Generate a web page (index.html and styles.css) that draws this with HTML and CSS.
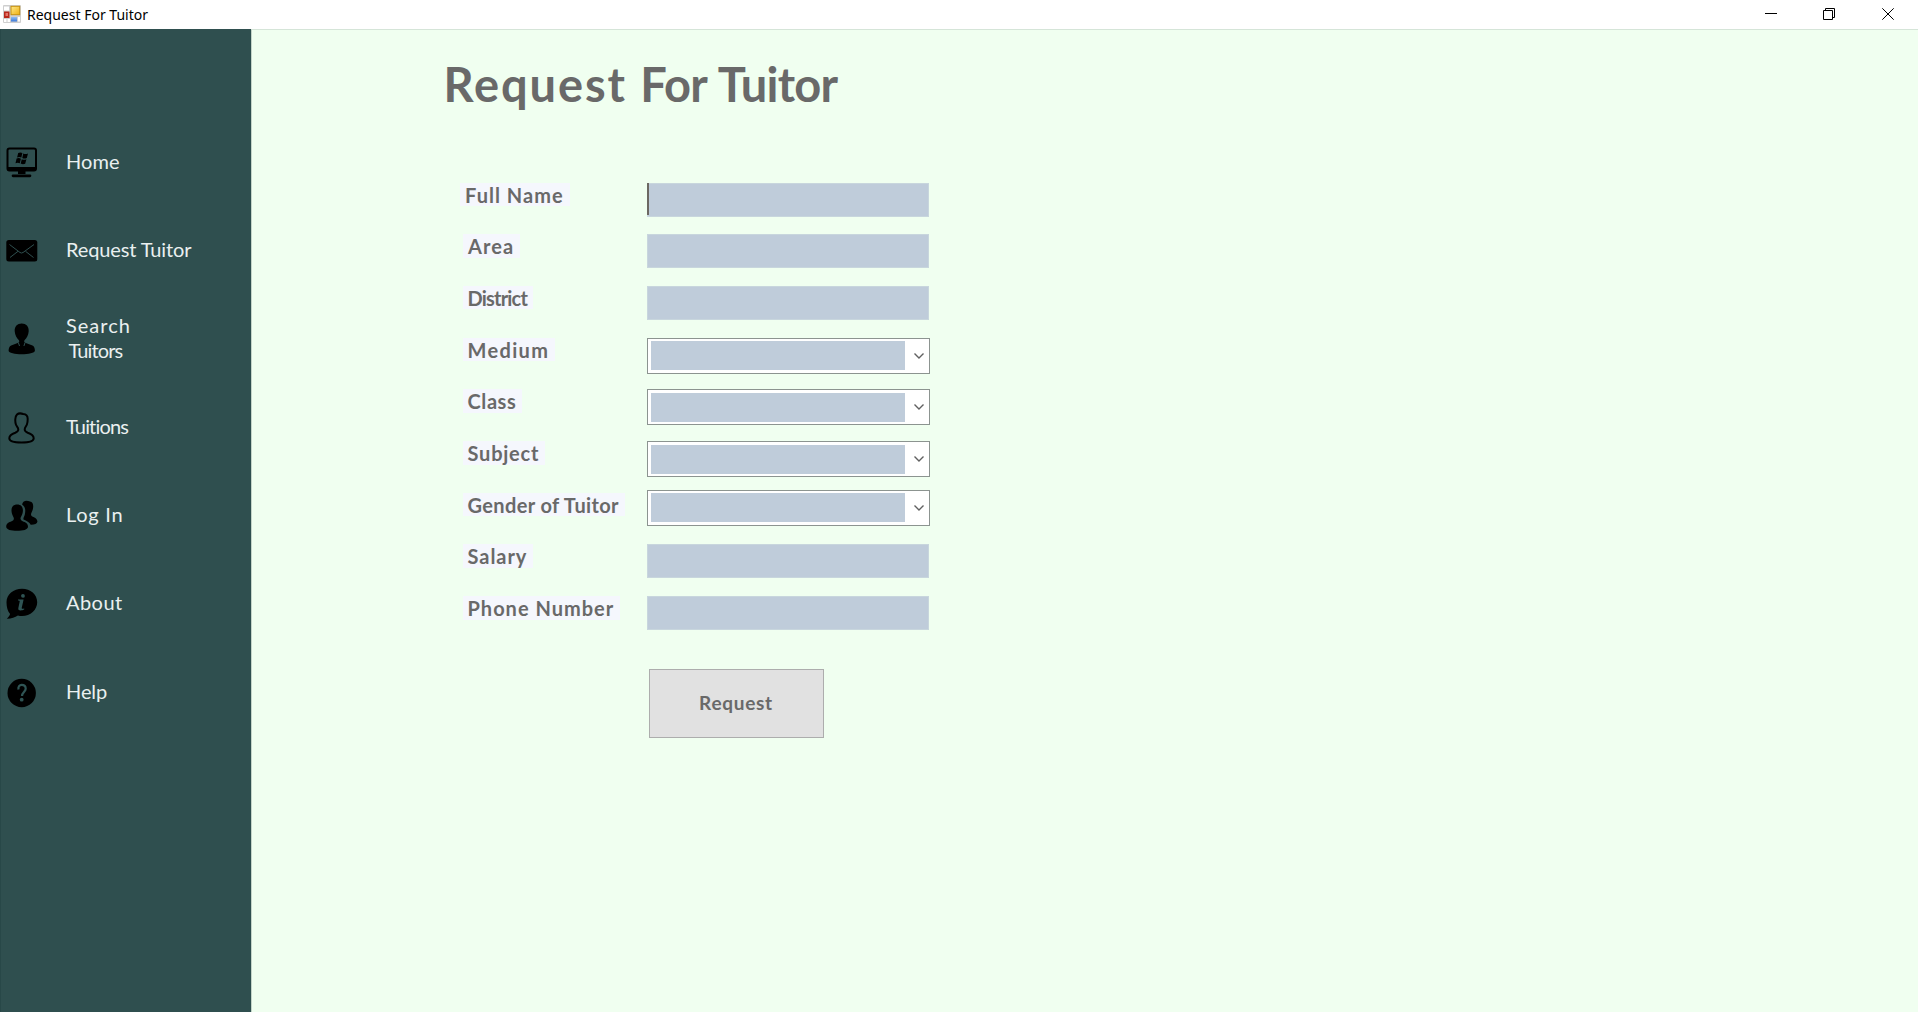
FILE: index.html
```html
<!DOCTYPE html>
<html lang="en">
<head>
<meta charset="utf-8">
<title>Request For Tuitor</title>
<link rel="stylesheet" href="styles.css">
</head>
<body>
<div class="window">
  <header class="titlebar">
    <svg class="app-icon" width="18" height="18" viewBox="0 0 18 18">
      <defs>
        <linearGradient id="gold" x1="0" y1="0" x2="1" y2="1"><stop offset="0" stop-color="#ffe98a"/><stop offset="1" stop-color="#eeb010"/></linearGradient>
        <linearGradient id="blue" x1="0" y1="0" x2="0" y2="1"><stop offset="0" stop-color="#8fbdf5"/><stop offset="1" stop-color="#3a78d8"/></linearGradient>
      </defs>
      <rect width="18" height="18" rx="1" fill="#cfcfcf"/>
      <path d="M1 1.500h5v4H1zM1 14h2.500v3H1zM4.500 14h2.500v3H4.500zM15 12h2v4.500h-2z" fill="#fff"/>
      <rect x="1" y="6.500" width="5.500" height="6.500" fill="#b8281c"/>
      <rect x="2.500" y="8" width="2.500" height="3" fill="#e4756a"/>
      <rect x="8" y="1.300" width="8.700" height="8.400" fill="url(#gold)" stroke="#c8920c"/>
      <rect x="8" y="12" width="6" height="4.500" fill="url(#blue)"/>
    </svg>
    <span class="caption">Request For Tuitor</span>
    <div class="controls">
      <svg width="12" height="12" viewBox="0 0 12 12"><path d="M0 5.500h12"/></svg>
      <svg width="12" height="12" viewBox="0 0 12 12"><path d="M.5 2.500h9v9h-9zM2.500 2.500v-2h9v9h-2"/></svg>
      <svg width="12" height="12" viewBox="0 0 12 12"><path d="M.3.300l11.400 11.400M11.700.300L.3 11.700"/></svg>
    </div>
  </header>
  <div class="body">
    <nav class="sidebar">
      <a class="item"><svg class="icon" viewBox="0 0 32 32">
        <path fill-rule="evenodd" d="M3.500.500h24.500a3 3 0 0 1 3 3v18a3 3 0 0 1-3 3H3.500a3 3 0 0 1-3-3v-18a3 3 0 0 1 3-3zm0 2a1 1 0 0 0-1 1V20H29V3.500a1 1 0 0 0-1-1z"/>
        <path d="M12 24h7.500v3H12zM7 27.500h17a1.300 1.300 0 0 1 0 2.700H7a1.300 1.300 0 0 1 0-2.700z"/>
        <path d="M12.200 6q2.300-1 4.200.100l-1.100 4.500q-2-1-4.200-.100zM17.300 6.600q2.200 1 4.700 0l-1.200 4.500q-2.300 1-4.500 0zM10.600 11.600q2.300-1 4.300.100l-1.100 4.500q-2-1-4.300 0zM15.800 12.200q2.200 1 4.600 0l-1.200 4.500q-2.300 1-4.500-.100z"/>
      </svg><span class="text home">Home</span></a>
      <a class="item"><svg class="icon" viewBox="0 0 32 32">
        <rect x=".3" y="5" width="31" height="21.500" rx="2.500"/>
        <path class="cut" d="M3.500 9.500L14 17.500q1.500 1 3 0L28 9.500M4 22.500l8-6.200M27.500 22.500l-8-6.200"/>
      </svg><span class="text request">Request Tuitor</span></a>
      <a class="item"><svg class="icon" viewBox="0 0 32 32">
        <path d="M15.700.600c4.500 0 7.200 3 7 7.600-.2 4-2.200 7.200-4 8.800-.6.600-.6 1.700-.2 2.500l8 3.100c1.700.7 2.400 3.200 2.400 5.100 0 2.200-6.600 3.500-13.200 3.500S2.600 29.900 2.600 27.700c0-1.900.8-4.400 2.500-5.100l7.900-3.100c.4-.8.300-1.900-.3-2.500-1.700-1.600-3.800-4.800-4-8.800-.2-4.600 2.500-7.600 7-7.600z"/>
        <path class="cut" d="M12.500 20l1 3M18.900 20l-1 3"/>
      </svg><span class="text search"><span class="line">Search</span><span class="line second">Tuitors</span></span></a>
      <a class="item"><svg class="icon" viewBox="0 0 32 32">
        <path class="outline" d="M11 2.500C13 .700 15 1.200 17.200 2c3 .2 4.500 2 4.500 5 0 2-.2 3.700-.8 5.500-.7 2-2.200 3-2.200 5 0 1.800 1 2.400 3 3.200 3.300 1 6 2.200 6 5.500 0 3.500-5.300 4.300-12.200 4.300S3.300 29.700 3.300 26.200c0-3.300 2.700-4.500 6-5.500 2-.8 3-1.400 3-3.200 0-2-1.700-3-2.400-5-.6-1.700-.7-3.500-.6-5.300.1-2 .6-3.600 1.700-4.700z"/>
      </svg><span class="text tuitions">Tuitions</span></a>
      <a class="item"><svg class="icon" viewBox="0 0 32 32">
        <path d="M17.500 1.800C19.800-.1 22 .900 24 1.500c3 .4 3.700 3.500 2.900 7.500-.4 2.300-1.900 3.800-1.900 5.500 0 1.500 1.500 2 3 2.800 2 1 3.600 2.600 3.400 4.500-.2 2-3 3-6.700 2.900-1.300-2.500-4-3.900-7.200-5.200-.4-1.700.7-2.800 1.200-4.500.9-3.500 1.200-8.200-2.600-10.600.2-1.100.7-1.900 1.400-2.600z"/>
        <path d="M11.200 4.500c4 0 5.900 2.500 5.700 6.500-.1 3-1.500 4.700-2.200 6.500-.6 1.700.2 2.900 2 3.700 2.600 1 5.300 2.100 5.300 5.200 0 3.300-5 4.300-11 4.300S.2 29.700.2 26.400c0-3.100 2.800-4.200 5.400-5.200 1.900-.8 2.700-2 2-3.700-.6-1.800-2-3.500-2.100-6.500-.2-4 1.700-6.500 5.700-6.500z"/>
      </svg><span class="text login">Log In</span></a>
      <a class="item"><svg class="icon" viewBox="0 0 32 32">
        <path d="M16 .800c8.500 0 15.200 5.800 15.200 13.400S24.500 28 16 28c-1.500 0-2.800-.1-4.100-.5C9 29.500 5 30.800.900 30.700c.6-.9 2.400-1.900 3.200-4.700C1.700 23.200.5 19 .5 14.200.5 6.600 7.500.800 16 .800z"/>
        <path class="hole" d="M17 6a1.900 1.900 0 1 1-.1 3.800A1.900 1.900 0 0 1 17 6zM12 11.600h5.600l-1.900 8.500c-.2 1 .8.900 2.500.3v1.100c-2 1.100-6.500 1.700-5.900-1.300l1.400-6.600c.2-.8-.4-1-1.700-1z"/>
      </svg><span class="text about">About</span></a>
      <a class="item"><svg class="icon" viewBox="0 0 32 32">
        <circle cx="15.700" cy="16" r="14.200"/>
        <path class="question" d="M12.500 12.500c-.6-3 1-4.600 3.200-4.600 2.400 0 4 1.500 4 3.900 0 3-3.700 3.600-3.700 7.200"/>
        <circle class="hole" cx="15.700" cy="22.700" r="1.900"/>
      </svg><span class="text help">Help</span></a>
    </nav>
    <main class="content">
      <h1 class="heading"><span class="wide">Request</span> For Tuitor</h1>
      <form class="form">
        <div class="row"><label class="label full-name">Full Name</label><div class="input focused"></div></div>
        <div class="row"><label class="label area">Area</label><div class="input"></div></div>
        <div class="row"><label class="label district">District</label><div class="input"></div></div>
        <div class="row"><label class="label medium">Medium</label><div class="combo"><div class="value"></div><svg class="chevron" viewBox="0 0 10 6"><path d="M.5.500L5 5 9.500.500"/></svg></div></div>
        <div class="row"><label class="label class-name">Class</label><div class="combo"><div class="value"></div><svg class="chevron" viewBox="0 0 10 6"><path d="M.5.500L5 5 9.500.500"/></svg></div></div>
        <div class="row"><label class="label subject">Subject</label><div class="combo"><div class="value"></div><svg class="chevron" viewBox="0 0 10 6"><path d="M.5.500L5 5 9.500.500"/></svg></div></div>
        <div class="row"><label class="label gender">Gender of Tuitor</label><div class="combo raised"><div class="value"></div><svg class="chevron" viewBox="0 0 10 6"><path d="M.5.500L5 5 9.500.500"/></svg></div></div>
        <div class="row"><label class="label salary">Salary</label><div class="input"></div></div>
        <div class="row"><label class="label phone">Phone Number</label><div class="input"></div></div>
        <button class="submit" type="button">Request</button>
      </form>
    </main>
  </div>
</div>
</body>
</html>
```
FILE: styles.css
```css
* { box-sizing: border-box; }
body { margin: 0; font-family: "Century Gothic", Lato, sans-serif; }
.window { display: flex; flex-direction: column; width: 100vw; height: 100vh; overflow: hidden; }

.titlebar { display: flex; align-items: center; height: 29px; padding: 0 19px 0 3px; background: #fff; }
.app-icon { flex: none; margin-top: -1px; }
.caption { margin-left: 6px; font: 14px/20px "Segoe UI", "Noto Sans", sans-serif; color: #000; }
.controls { display: flex; gap: 47px; margin-left: auto; margin-right: 5px; margin-top: -1px; }
.controls svg { fill: none; stroke: #000; stroke-width: 1; }
.controls svg:first-child { margin-right: -1px; }

.body { display: flex; flex: 1; min-height: 0; }
.sidebar { width: 251px; padding-top: 89.6px; background: #2f4f4f; border-left: 1px solid #284848; }
.item { display: flex; align-items: center; height: 88.3px; padding-left: 5px; color: #eaf0f0; }
.icon { flex: none; width: 32px; height: 32px; fill: #000; }
.cut { fill: none; stroke: #2f4f4f; stroke-width: 1; }
.outline { fill: none; stroke: #000; stroke-width: 2; }
.hole { fill: #2f5454; }
.question { fill: none; stroke: #2f5454; stroke-width: 2.2; }
.text { margin: -3px 0 0 28px; font-size: 20px; line-height: 24.5px; white-space: nowrap; }
.line { display: block; }
.second { margin-left: 2.5px; letter-spacing: -.89px; }
.home { letter-spacing: .08px; }
.request { letter-spacing: -.13px; }
.search { letter-spacing: 1px; }
.tuitions { letter-spacing: -.85px; }
.login { letter-spacing: .75px; }
.about { letter-spacing: .45px; }
.help { letter-spacing: -.08px; }

.content { flex: 1; padding: 26px 0 0 191.500px; background: #f0fff0; border-top: 1px solid #d5e5d8; border-left: 1px solid #c3d4c8; color: #696969; }
.heading { margin: 0; font-size: 47px; line-height: 56px; letter-spacing: -.75px; word-spacing: 2.5px; font-weight: 700; }
.wide { letter-spacing: 1.9px; }
.form { margin: 70.600px 0 0 19px; }
.row { display: flex; align-items: flex-start; justify-content: space-between; width: 467px; height: 51.700px; }
.label { padding: 1px 6px 0 5px; background: #f5f7fd; font-size: 20px; line-height: 22.500px; font-weight: 700; white-space: nowrap; }
.full-name { margin-left: -3px; padding-left: 5.5px; letter-spacing: 1.03px; }
.area { letter-spacing: 1.09px; padding-left: 5.500px; }
.district { letter-spacing: -.8px; }
.medium { letter-spacing: 1.35px; }
.class-name { letter-spacing: .59px; }
.subject { letter-spacing: .78px; }
.gender { letter-spacing: .38px; }
.salary { letter-spacing: .95px; }
.phone { letter-spacing: 1px; }
.input { width: 282px; height: 34px; margin-right: 1px; background: #bfccda; border: 1px solid #c8d6dd; }
.focused { position: relative; }
.focused::before { content: ""; position: absolute; left: -1px; top: -1px; width: 2px; height: 32px; background: #6c6862; }
.combo { display: flex; align-items: center; width: 283px; height: 36px; padding: 3px 5px 3px 3px; background: #fff; border: 1px solid #8c9490; }
.value { width: 254px; height: 29px; background: #bfccda; }
.raised { margin-top: -3px; }
.chevron { width: 10px; height: 6px; margin-left: auto; fill: none; stroke: #606060; stroke-width: 1.4; overflow: visible; }
.submit { display: block; width: 175px; height: 69px; margin: 21.200px 0 0 186px; padding: 0; background: #e1e1e1; border: 1px solid #adadad; color: #696969; font: 700 19px/24px "Century Gothic", Lato, sans-serif; letter-spacing: .71px; }
```
